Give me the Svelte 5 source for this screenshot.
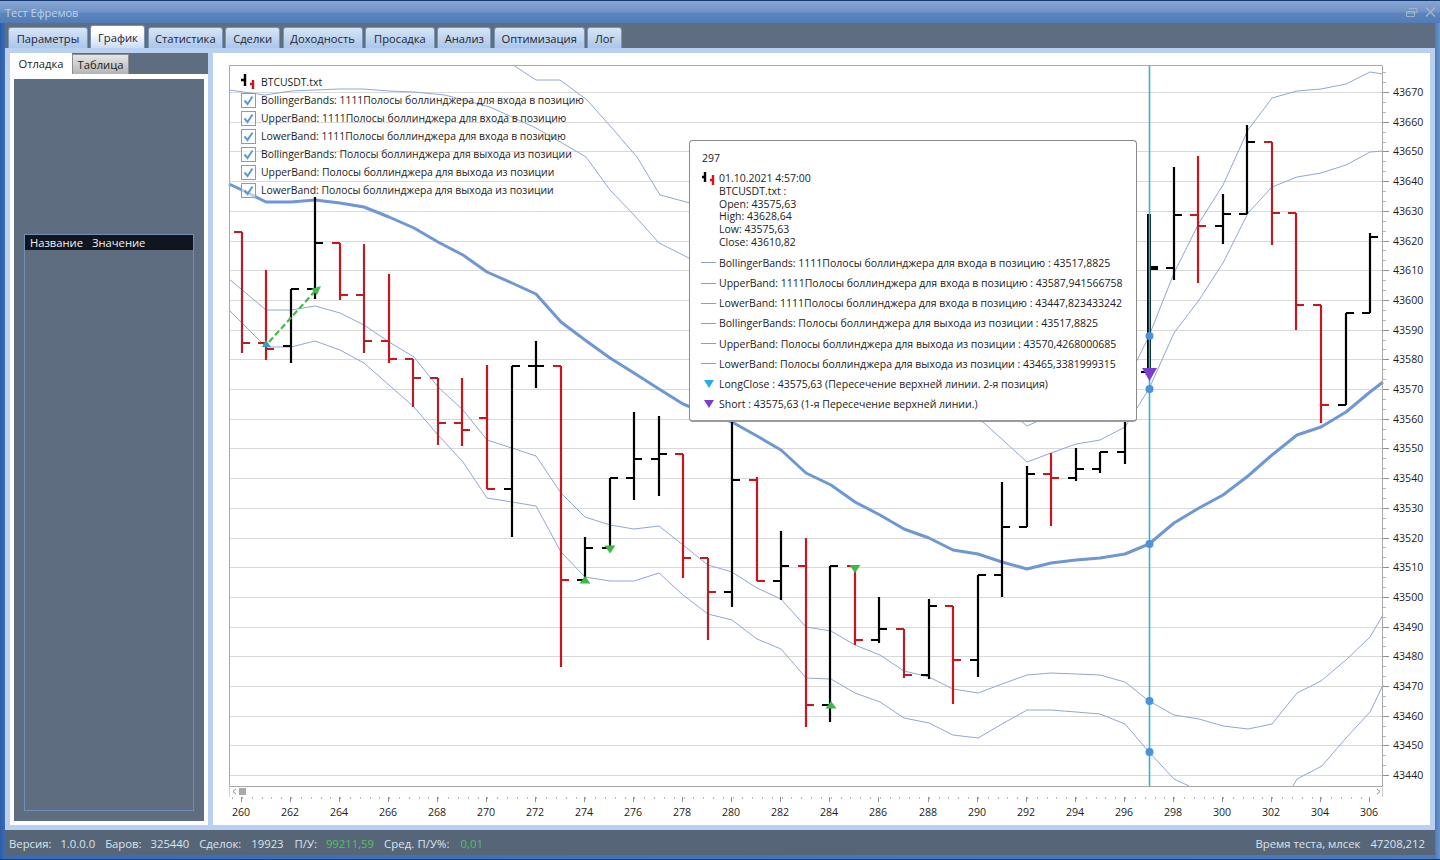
<script>
  const tabs = [['Параметры',80],['График',55],['Статистика',75],['Сделки',55],['Доходность',80],['Просадка',70],['Анализ',54],['Оптимизация',91],['Лог',35]];
  const legend = ['BollingerBands: 1111Полосы боллинджера для входа в позицию','UpperBand: 1111Полосы боллинджера для входа в позицию','LowerBand: 1111Полосы боллинджера для входа в позицию','BollingerBands: Полосы боллинджера для выхода из позиции','UpperBand: Полосы боллинджера для выхода из позиции','LowerBand: Полосы боллинджера для выхода из позиции'];
  const tipSeries = ['BollingerBands: 1111Полосы боллинджера для входа в позицию : 43517,8825','UpperBand: 1111Полосы боллинджера для входа в позицию : 43587,941566758','LowerBand: 1111Полосы боллинджера для входа в позицию : 43447,823433242','BollingerBands: Полосы боллинджера для выхода из позиции : 43517,8825','UpperBand: Полосы боллинджера для выхода из позиции : 43570,4268000685','LowerBand: Полосы боллинджера для выхода из позиции : 43465,3381999315'];
  const R = '#c8161c', D = '#ad2329', K = '#000';
  // high, low, open (left tick), close (right tick), colour — page pixels, bars 260..306
  const bars = [
    [232,353,232,343,D],[270,360,343,349,R],[289,363,346,289,K],[197,299,289,243,K],[243,300,243,295,R],
    [244,353,295,341,D],[274,363,341,359,R],[359,407,359,378,D],[378,445,378,423,D],[378,446,423,430,R],
    [365,489,418,489,R],[366,537,489,366,K],[341,388,366,366,K],[366,667,366,580,R],[537,580,580,548,K],
    [478,548,548,478,K],[412,500,478,459,K],[416,496,459,454,K],[454,578,454,558,R],[558,640,558,592,D],
    [400,607,592,480,K],[477,581,480,581,R],[531,600,581,566,K],[538,727,566,705,R],[566,722,705,566,K],
    [566,645,566,640,R],[597,643,640,629,K],[629,678,629,675,D],[599,679,675,606,K],[606,704,606,660,R],
    [575,677,660,575,K],[482,597,575,527,K],[466,527,527,474,K],[453,526,474,478,R],[448,481,478,469,K],
    [452,473,469,452,K],[380,464,452,374,K],[214,372,372,268,K],[167,280,268,215,K],[156,283,215,226,R],
    [194,244,226,214,K],[125,214,214,142,K],[142,245,142,213,D],[213,330,213,305,R],[305,423,305,405,R],
    [313,405,405,313,K],[233,313,313,237,K]
  ];
  const bx = n => Math.round(241.7 + 24.53 * n);
  const barPath = (b, i) => {
    const x = bx(i);
    return `M${x} ${b[0]}V${b[1]}M${x - 8} ${b[2]}H${x}M${x} ${b[3]}H${x + 8}`;
  };
  const thick = '229,184 242,190 266,202 291,202 315,200 340,203 364,207 389,217 414,228 438,242 463,255 487,272 512,283 536,294 561,322 585,340 610,358 634,373 659,389 683,404 708,414 732,422 757,436 781,450 806,473 831,485 855,502 880,515 904,529 929,538 953,550 978,554 1002,562 1027,569 1051,563 1076,560 1100,558 1125,554 1149,544 1174,523 1199,508 1223,495 1248,476 1272,455 1297,435 1321,427 1346,412 1370,392 1383,382';
  const thin = [
    '229,90 265,95 291,91 315,90 340,89 363,89 389,91 414,92 445,95 490,107 536,128 557,140 586,157 610,190 634,215 659,243 683,255 708,268 760,310 900,385 983,422 1027,462 1051,453 1076,444 1100,440 1125,427 1149,389 1174,333 1199,300 1223,263 1248,213 1272,187 1297,177 1321,173 1346,165 1370,152 1383,151',
    '513,65 536,80 560,80 587,100 612,128 637,157 660,195 690,203 760,270 900,370 1002,405 1027,426 1051,415 1076,410 1100,405 1125,385 1149,336 1174,273 1199,223 1223,185 1248,130 1272,98 1297,91 1321,89 1346,84 1370,72 1383,74',
    '229,279 266,310 291,310 315,306 340,313 364,325 389,342 414,357 438,387 463,410 487,440 512,448 536,456 561,493 585,517 610,525 634,529 659,526 683,545 708,565 732,572 757,588 781,599 806,627 831,631 855,645 880,655 904,671 929,677 953,689 978,693 1002,684 1027,675 1051,673 1076,674 1100,675 1125,682 1149,701 1174,715 1199,719 1223,726 1248,729 1272,724 1297,693 1321,681 1346,660 1370,637 1383,615',
    '229,310 266,347 291,347 315,341 340,350 364,363 389,385 414,407 438,435 463,462 487,498 512,502 536,506 561,552 585,577 610,581 634,581 659,573 683,595 708,614 732,620 757,639 781,649 806,678 831,679 855,693 880,702 904,718 929,723 953,735 978,738 1002,724 1027,710 1051,710 1076,712 1100,714 1125,724 1149,752 1174,779 1189,786',
    '1293,786 1297,779 1322,766 1346,738 1370,712 1383,685'
  ];
  const yLabels = Array.from({ length: 24 }, (_, i) => ({ v: 43670 - 10 * i, y: Math.round(92 + 29.7 * i) }));
  const yMinor = Array.from({ length: 72 }, (_, i) => Math.round(72.2 + 9.9 * i));
  const xLabels = Array.from({ length: 24 }, (_, i) => ({ v: 260 + 2 * i, x: bx(2 * i) }));
  const xMinor = Array.from({ length: 116 }, (_, i) => Math.round(232.2 + 9.812 * i));
  const dots = [336, 389, 544, 701, 752];
</script>

<div class="win">
  <header class="title">
    <span>Тест Ефремов</span>
    <svg class="winbtns" width="34" height="14" viewBox="0 0 34 14">
      <path d="M6 3.5h8v4h-2M3.5 6.5h8v5h-8zM3.5 8h8" fill="none" stroke="#9fb3cd" stroke-width="1"/>
      <path d="M23 2.5l9 9M32 2.5l-9 9" fill="none" stroke="#9fb3cd" stroke-width="1.6"/>
    </svg>
  </header>

  <nav class="tabs">
    {#each tabs as t, i}
      <div class="tab" class:active={i === 1} style:width="{t[1]}px">{t[0]}</div>
    {/each}
  </nav>

  <main class="panel">
    <aside class="side">
      <div class="sidetabs">
        <div class="stab on">Отладка</div>
        <div class="stab">Таблица</div>
      </div>
      <div class="sidebody">
        <div class="grid">
          <div class="gridhead"><span>Название</span><span>Значение</span></div>
        </div>
      </div>
    </aside>

    <section class="chart">
      <svg class="plot" viewBox="213 53 1217 772" width="1217" height="772">
        {#each yLabels as l}
          <path d="M229 {l.y + 0.5}H1383" stroke="#d9d9d9" fill="none"/>
        {/each}
        {#each thin as p}
          <polyline points={p} fill="none" stroke="#8ea8d2" stroke-width="1"/>
        {/each}
        <polyline points={thick} fill="none" stroke="#6e97d3" stroke-width="3" stroke-linejoin="round"/>
        {#each bars as b, i}
          <path d={barPath(b, i)} fill="none" stroke={b[4]} stroke-width="2.2"/>
        {/each}
        <path d="M1149 214V372" stroke="#000" stroke-width="4"/>
        <path d="M1150 268H1158" stroke="#000" stroke-width="4"/>

        <path d="M1149.5 65V786" stroke="#35b6d0" stroke-width="1.6"/>
        {#each dots as y}
          <circle cx="1149.5" cy={y} r="4" fill="#4a92dc"/>
        {/each}

        <path d="M269 342L316 290" stroke="#43b84b" stroke-width="2.2" stroke-dasharray="6 3" fill="none"/>
        <polygon points="321,286 311,289 317,295" fill="#43b84b"/>
        <polygon points="266,340 262,347 271,347" fill="#27a7bb"/>
        <polygon points="585,576 579.5,583.5 590.5,583.5" fill="#3fb84a"/>
        <polygon points="610,553.5 604.5,545.5 615.5,545.5" fill="#3fb84a"/>
        <polygon points="831,701 825.5,708.5 836.5,708.5" fill="#3fb84a"/>
        <polygon points="855,573 849.5,565 860.5,565" fill="#3fb84a"/>
        <polygon points="1149.5,381 1142,368 1157,368" fill="#7a3fd0"/>

        <path d="M229.5 786V65.5H1382.5V786M229 786.5H1383" fill="none" stroke="#a9a9a9"/>
        <path d="M229.5 786V797M1382.5 786V797" fill="none" stroke="#cfcfcf"/>
        <path d="M236 789l-3 2.5 3 2.5M1377 789l3 2.5-3 2.5" fill="none" stroke="#8c8c8c"/>
        <rect x="239" y="788" width="7" height="7" fill="#a9a9a9"/>

        {#each yMinor as y}
          <path d="M1383 {y + 0.5}h3" stroke="#b5b5b5"/>
        {/each}
        {#each yLabels as l}
          <path d="M1383 {l.y + 0.5}h6" stroke="#8f8f8f"/>
          <text class="axis" x="1393" y={l.y + 4}>{l.v}</text>
        {/each}
        {#each xMinor as x}
          <path d="M{x + 0.5} 797v2" stroke="#b5b5b5"/>
        {/each}
        {#each xLabels as l}
          <path d="M{l.x - 0.5} 797v5" stroke="#8f8f8f"/>
          <text class="axis" x={l.x - 1} y="816" text-anchor="middle">{l.v}</text>
        {/each}
      </svg>

      <div class="legend">
        <div class="lrow head">
          <svg class="baricon" width="15" height="15" viewBox="0 0 15 15">
            <path d="M4 0V12M0 6H4" stroke="#000" stroke-width="2.4" fill="none"/>
            <path d="M12 6V15M9 10H12" stroke="#c8161c" stroke-width="2.4" fill="none"/>
          </svg>
          <span>BTCUSDT.txt</span>
        </div>
        {#each legend as l}
          <div class="lrow">
            <svg class="check" width="15" height="15" viewBox="0 0 15 15">
              <rect x=".5" y=".5" width="14" height="14" fill="#fff" fill-opacity=".55" stroke="#7f9fc0"/>
              <path d="M3.5 7.5l3 3.5 5-7.5" fill="none" stroke="#5a9bd8" stroke-width="2"/>
            </svg>
            <span>{l}</span>
          </div>
        {/each}
      </div>

      <div class="tip">
        <div class="num">297</div>
        <div class="ohlc">
          <svg class="tipicon" width="15" height="14" viewBox="0 0 15 14">
            <path d="M3 0V10M0 5H3" stroke="#000" stroke-width="2.4" fill="none"/>
            <path d="M11 3V13M8 8H11" stroke="#e01010" stroke-width="2.4" fill="none"/>
          </svg>
          <div class="ohlctext">
            <div>01.10.2021 4:57:00</div>
            <div>BTCUSDT.txt :</div>
            <div>Open: 43575,63</div>
            <div>High: 43628,64</div>
            <div>Low: 43575,63</div>
            <div>Close: 43610,82</div>
          </div>
        </div>
        <div class="rows">
          {#each tipSeries as s}
            <div class="trow"><i class="swatch"></i><span>{s}</span></div>
          {/each}
          <div class="trow">
            <svg class="tri" width="15" height="10" viewBox="0 0 15 10"><polygon points="3,1 13,1 8,9" fill="#28aee6"/></svg>
            <span>LongClose : 43575,63 (Пересечение верхней линии. 2-я позиция)</span>
          </div>
          <div class="trow">
            <svg class="tri" width="15" height="10" viewBox="0 0 15 10"><polygon points="3,1 13,1 8,9" fill="#7a3fd0"/></svg>
            <span>Short : 43575,63 (1-я Пересечение верхней линии.)</span>
          </div>
        </div>
      </div>
    </section>
  </main>

  <footer class="status">
    <div class="left">
      <span class="k">Версия:</span><span class="v a1">1.0.0.0</span>
      <span class="k a2">Баров:</span><span class="v a3">325440</span>
      <span class="k a4">Сделок:</span><span class="v a5">19923</span>
      <span class="k a6">П/У:</span><span class="g a7">99211,59</span>
      <span class="k a8">Сред. П/У%:</span><span class="g a9">0,01</span>
    </div>
    <div class="right">
      <span>Время теста, млсек</span><span>47208,212</span>
    </div>
  </footer>
</div>

<style>
  :global(body) { margin: 0; background: #3a6aae; }
  .win {
    width: 1440px; height: 860px; box-sizing: border-box; overflow: hidden;
    display: flex; flex-direction: column;
    padding: 0 5px 4px;
    background: linear-gradient(90deg, #2c5ea8 0, #3a6cb4 5px, #4a7cbc 1435px, #6b94c8 1440px);
    border-bottom: 1px solid #1c3f78;
    font-family: "Open Sans", "Noto Sans", sans-serif;
    font-size: 11px;
    color: #222;
  }
  .title {
    height: 23px; flex: none; margin: 0 -5px; padding: 0 5px;
    display: flex; align-items: center; justify-content: space-between;
    border-top: 1px solid #14386f; box-sizing: border-box;
    background: linear-gradient(#86a6d2 0, #7093c7 11px, #5c85bd 12px, #527cb7 22px);
    color: #c2d2e6; font-size: 11px;
  }
  .winbtns { margin-right: -2px; }
  .tabs {
    height: 25px; flex: none; background: #5e6e80;
    display: flex; align-items: flex-end; gap: 2.4px; padding-left: 3px; box-sizing: border-box;
  }
  .tab {
    height: 21px; flex: none; box-sizing: border-box;
    display: flex; align-items: center; justify-content: center;
    border: 1px solid #7c94b4; border-bottom: 0; border-radius: 3px 3px 0 0;
    background: linear-gradient(#d7e5f6, #aac6ea);
    color: #1d2530; font-size: 11.2px;
  }
  .tab.active {
    height: 24px; margin-bottom: -1px; background: linear-gradient(#ffffff 30%, #c6daf4);
  }
  .panel {
    flex: 1; min-height: 0; box-sizing: border-box;
    background: #b9d0f0; padding: 5px;
    display: flex; gap: 5px;
  }
  .side {
    width: 198px; flex: none; display: flex; flex-direction: column;
    background: #fff;
  }
  .sidetabs {
    height: 26px; flex: none; box-sizing: border-box; background: #5e6e80;
    display: flex; align-items: flex-start;
    box-shadow: inset 0 -5px 0 #fff;
  }
  .stab {
    height: 20px; margin-top: 1px; width: 57px; box-sizing: border-box;
    display: flex; align-items: center; justify-content: center;
    background: linear-gradient(#e6e6e6, #b4b4b4); border: 1px solid #8e8e8e; border-bottom: 0;
    font-size: 11.2px; color: #1c1c1c;
  }
  .stab.on {
    width: 62px; height: 26px; margin-top: 0; border: 0; background: #fff; padding-bottom: 5px;
  }
  .sidebody {
    flex: 1; margin: 0 4px 4px; background: #5e6e80;
    padding: 155px 10px 10px; display: flex; box-sizing: border-box;
  }
  .grid { flex: 1; border: 1px solid #6f8fb6; box-sizing: border-box; }
  .gridhead {
    height: 15px; background: #10161f; color: #f2f2f2; display: flex; align-items: center;
    gap: 9px; padding-left: 5px; font-size: 11.2px;
  }
  .chart { flex: 1; position: relative; background: #fff; overflow: hidden; }
  .plot { display: block; position: absolute; left: 0; top: 0; }
  .axis { font-size: 10.6px; fill: #1c1c1c; font-family: "Open Sans", "Noto Sans", sans-serif; }
  .legend {
    position: absolute; left: 28px; top: 20px; color: #1c1c1c; font-size: 10.4px;
  }
  .lrow { height: 18px; display: flex; align-items: center; gap: 5px; white-space: nowrap; }
  .baricon { margin-top: -2px; }
  .check { flex: none; }
  .tip {
    position: absolute; left: 476px; top: 87px; width: 448px; height: 282px; box-sizing: border-box;
    background: #fff; border: 1px solid #8a8a8a; border-bottom: 2px solid #9a9a9a; border-radius: 4px;
    padding: 10px 12px 0 12px; color: #222; font-size: 10.5px; white-space: nowrap;
  }
  .num { line-height: 14px; }
  .ohlc { display: flex; margin-top: 7px; }
  .tipicon { flex: none; margin: 0 2px 0 0; }
  .ohlctext { line-height: 12.8px; }
  .rows { margin-top: 4px; }
  .trow { height: 20.2px; display: flex; align-items: center; gap: 3px; margin-left: -1px; }
  .swatch { width: 15px; height: 1px; background: #86a2bf; flex: none; }
  .tri { flex: none; }
  .status {
    height: 25px; flex: none; background: #566678; color: #dde4ec; font-size: 11.3px;
    display: flex; align-items: center; justify-content: space-between;
    padding: 1px 10px 0 4px; box-sizing: border-box;
  }
  .left, .right { display: flex; align-items: center; }
  .k, .v, .g { white-space: nowrap; }
  .g { color: #55c066; }
  .a1 { margin-left: 9px; }
  .a2 { margin-left: 10px; }
  .a3 { margin-left: 9px; }
  .a4 { margin-left: 10px; }
  .a5 { margin-left: 10px; }
  .a6 { margin-left: 11px; }
  .a7 { margin-left: 9px; }
  .a8 { margin-left: 10px; letter-spacing: .1px; }
  .a9 { margin-left: 11px; }
  .right { gap: 10px; }
</style>
